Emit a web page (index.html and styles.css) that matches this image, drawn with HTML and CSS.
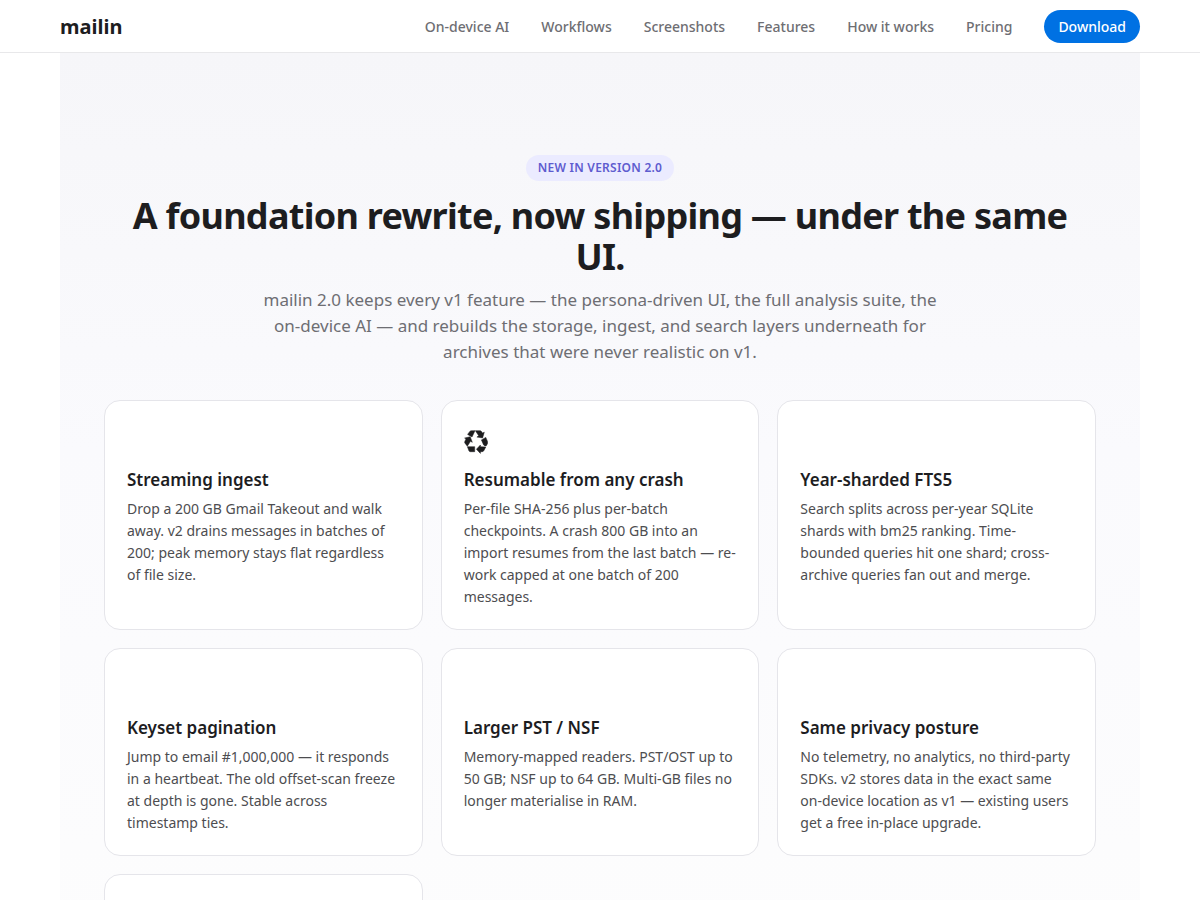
FILE: index.html
```html
<!DOCTYPE html>
<html lang="en">
<head>
<meta charset="utf-8">
<meta name="viewport" content="width=device-width, initial-scale=1">
<title>mailin</title>
<link rel="stylesheet" href="styles.css">
</head>
<body>
<header class="site-header">
  <div class="header-inner">
    <a class="brand" href="#top">mailin</a>
    <nav class="nav" aria-label="Main">
      <a href="#ai">On-device AI</a>
      <a href="#workflows">Workflows</a>
      <a href="#screenshots">Screenshots</a>
      <a href="#features">Features</a>
      <a href="#how">How it works</a>
      <a href="#pricing">Pricing</a>
      <a class="download" href="#download">Download</a>
    </nav>
  </div>
</header>
<main class="release" id="top">
  <div class="intro">
    <span class="badge">NEW IN VERSION 2.0</span>
    <h1>A foundation rewrite, now shipping — under the same UI.</h1>
    <p class="lead">mailin 2.0 keeps every v1 feature — the persona-driven UI, the full analysis suite, the on-device AI — and rebuilds the storage, ingest, and search layers underneath for archives that were never realistic on v1.</p>
  </div>
  <div class="cards">
    <article class="card">
      <div class="icon"></div>
      <h2>Streaming ingest</h2>
      <p>Drop a 200 GB Gmail Takeout and walk away. v2 drains messages in batches of 200; peak memory stays flat regardless of file size.</p>
    </article>
    <article class="card">
      <div class="icon">
        <svg width="24" height="24" viewBox="0 0 24 24" fill="currentColor" stroke="currentColor" stroke-width="0.5" aria-hidden="true">
          <path d="M3.6 4.4 6 1.2Q6.6.7 7.4.7H11L8 7Z"/>
          <path d="M11.4.7H16.2Q17 .7 17.5 1.5L18.5 3.1 20.3 2.2 18.6 7.9 12.9 7.1 14.7 5.8Z"/>
          <path d="M17.4 9.9 21.8 7.4 23.5 11.4Q24 12.8 23.3 14L22.3 15.8Q20.6 16.2 19.6 14.9Z"/>
          <path d="M21.8 17 19.8 20.7Q19.3 21.7 18 21.7H16.4V23.4L12.4 19.2 16.4 15V16.7Z"/>
          <path d="M3.4 16.7H10.7V21.7H6.3Q5.4 21.7 4.9 20.8Z"/>
          <path d="M.6 8.1 6.2 6.7 8.3 12.3 6.5 11.3 3.3 16.2.8 12.9Q.4 12.2.9 11.2L2 9.1Z"/>
        </svg>
      </div>
      <h2>Resumable from any crash</h2>
      <p>Per-file SHA-256 plus per-batch checkpoints. A crash 800 GB into an import resumes from the last batch — re-work capped at one batch of 200 messages.</p>
    </article>
    <article class="card">
      <div class="icon"></div>
      <h2>Year-sharded FTS5</h2>
      <p>Search splits across per-year SQLite shards with bm25 ranking. Time-bounded queries hit one shard; cross-archive queries fan out and merge.</p>
    </article>
    <article class="card">
      <div class="icon"></div>
      <h2>Keyset pagination</h2>
      <p>Jump to email #1,000,000 — it responds in a heartbeat. The old offset-scan freeze at depth is gone. Stable across timestamp ties.</p>
    </article>
    <article class="card">
      <div class="icon"></div>
      <h2>Larger PST / NSF</h2>
      <p>Memory-mapped readers. PST/OST up to 50 GB; NSF up to 64 GB. Multi-GB files no longer materialise in RAM.</p>
    </article>
    <article class="card">
      <div class="icon"></div>
      <h2>Same privacy posture</h2>
      <p>No telemetry, no analytics, no third-party SDKs. v2 stores data in the exact same on-device location as v1 — existing users get a free in-place upgrade.</p>
    </article>
    <article class="card">
      <div class="icon"></div>
    </article>
  </div>
</main>
</body>
</html>
```
FILE: styles.css
```css
* {
  box-sizing: border-box;
}

body {
  margin: 0;
  background: #fff;
  color: #1d1d1f;
  font-family: "Noto Sans", sans-serif;
}

h1, h2, p {
  margin: 0;
}

a {
  color: inherit;
  text-decoration: none;
}

.site-header {
  position: sticky;
  top: 0;
  z-index: 1;
  background: #fff;
  border-bottom: 1px solid #e8e8ea;
}

.header-inner {
  display: flex;
  align-items: center;
  justify-content: space-between;
  max-width: 1080px;
  margin: 0 auto;
  padding: 10px 0 9px;
}

.brand {
  font-size: 20px;
  line-height: 32px;
  font-weight: 700;
}

.nav {
  display: flex;
  align-items: center;
  gap: 32px;
  font-size: 14px;
  line-height: 19px;
  font-weight: 500;
  color: #6e6e73;
}

.download {
  padding: 7px 14px;
  border-radius: 999px;
  background: #0071e3;
  color: #fff;
}

.release {
  max-width: 1080px;
  margin: 0 auto;
  padding: 102px 44px 80px;
  background: linear-gradient(#f6f6f9, #fafafd 40%, #fdfdfd);
}

.intro {
  display: flex;
  flex-direction: column;
  align-items: center;
  text-align: center;
}

.badge {
  padding: 4px 12px;
  border-radius: 999px;
  background: #ebebff;
  color: #5e5ccf;
  font-size: 12px;
  line-height: 18px;
  font-weight: 600;
  letter-spacing: 0.02em;
}

h1 {
  margin-top: 14px;
  font-size: 36px;
  line-height: 41px;
  font-weight: 700;
  letter-spacing: -0.02em;
}

.lead {
  max-width: 680px;
  margin-top: 10px;
  font-size: 17px;
  line-height: 26px;
  color: #6e6e73;
}

.cards {
  display: grid;
  grid-template-columns: repeat(3, 1fr);
  gap: 18px;
  margin-top: 35px;
}

.card {
  padding: 22px 22px 21px;
  border: 1px solid #e5e5ea;
  border-radius: 16px;
  background: #fff;
}

.icon {
  display: flex;
  align-items: center;
  height: 37px;
  margin-bottom: 8px;
}

.card h2 {
  font-size: 17px;
  line-height: 24px;
  font-weight: 600;
}

.card p {
  margin-top: 6px;
  font-size: 14px;
  line-height: 22px;
  color: #4d4d50;
}

@media (max-width: 900px) {
  .header-inner {
    flex-wrap: wrap;
    padding: 10px 20px;
  }

  .nav {
    flex-wrap: wrap;
    gap: 16px;
  }

  .release {
    padding: 60px 20px;
  }

  .cards {
    grid-template-columns: repeat(auto-fit, minmax(260px, 1fr));
  }
}
```
